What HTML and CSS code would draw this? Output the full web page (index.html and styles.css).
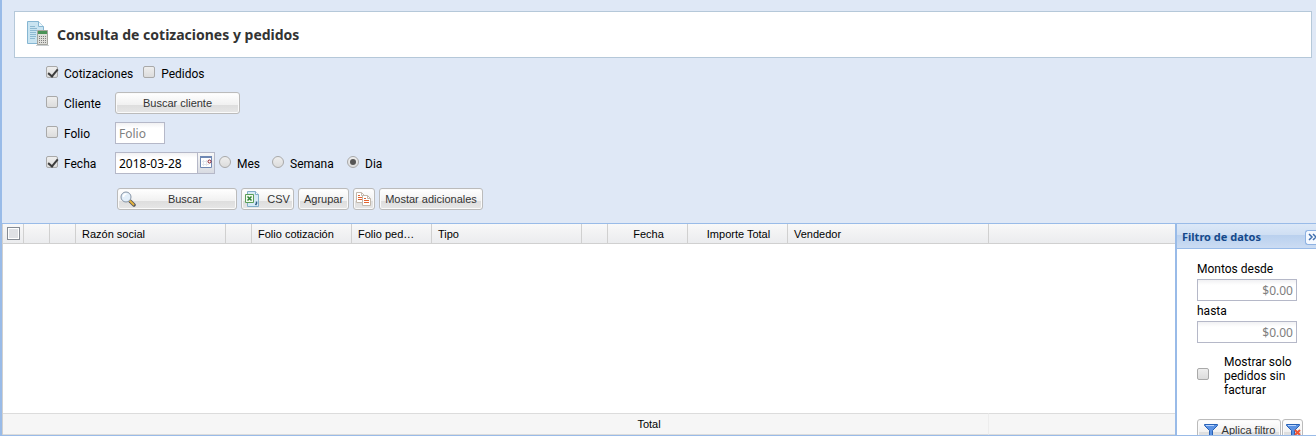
FILE: index.html
```html
<!DOCTYPE html>
<html lang="es">
<head>
<meta charset="utf-8">
<title>Consulta de cotizaciones y pedidos</title>
<link rel="stylesheet" href="styles.css">
</head>
<body>
<main class="page">
  <header class="title-bar">
    <svg class="title-icon" viewBox="0 0 24 26" aria-hidden="true">
      <path d="M1.500 .5h11l5 5v17h-16z" fill="#c9e4f1" stroke="#86b6d2"/>
      <path d="M12.500 .5v5h5" fill="#eef8fc" stroke="#86b6d2"/>
      <path d="M4 5.500h5M4 7.500h7M4 9.500h7M4 11.500h6M4 13.500h6M4 15.500h6M4 17.500h5" stroke="#8db9d1" fill="none"/>
      <path d="M11 9h11v15H11z" fill="#deded9"/>
      <path d="M11.500 9.500h10v14h-10z" fill="none" stroke="#a5a59e"/>
      <path d="M12 10h9v3h-9z" fill="#4a9357"/>
      <path d="M13.500 15v7M15.500 15v7M17.500 15v7M19.500 15v7" stroke="#7e7e7e" stroke-dasharray="1 1" fill="none"/>
      <path d="M10 24.500h13" stroke="#c8cdd0"/>
    </svg>
    <h1 class="title">Consulta de cotizaciones y pedidos</h1>
  </header>

  <form class="search">
    <div class="row">
      <label class="option"><input class="check" type="checkbox" checked>Cotizaciones</label>
      <label class="option"><input class="check" type="checkbox">Pedidos</label>
    </div>
    <div class="row">
      <label class="option option-fixed"><input class="check" type="checkbox">Cliente</label>
      <button class="btn btn-client" type="button">Buscar cliente</button>
    </div>
    <div class="row">
      <label class="option option-fixed"><input class="check" type="checkbox">Folio</label>
      <input class="field field-folio" type="text" placeholder="Folio" aria-label="Folio">
    </div>
    <div class="row">
      <label class="option option-fixed"><input class="check" type="checkbox" checked>Fecha</label>
      <div class="date">
        <input class="field field-date" type="text" value="2018-03-28" aria-label="Fecha">
        <button class="date-trigger" type="button" aria-label="Elegir fecha">
          <svg class="date-icon" viewBox="0 0 13 13" aria-hidden="true">
            <path d="M.5 .5h11v11H.5z" fill="#fff" stroke="#6f88b3"/>
            <path d="M0 0h12v2H0z" fill="#6f88b3"/>
            <path d="M3.500 4v6M6.500 4v6M2 5.500h5M2 8.500h7" stroke="#e2e6ed" fill="none"/>
            <circle cx="9.500" cy="5.500" r="1.500" fill="#fff" stroke="#8a1c28"/>
          </svg>
        </button>
      </div>
      <div class="periods">
        <label class="period period-month"><input class="radio" type="radio" name="periodo">Mes</label>
        <label class="period period-week"><input class="radio" type="radio" name="periodo">Semana</label>
        <label class="period"><input class="radio" type="radio" name="periodo" checked>Dia</label>
      </div>
    </div>
    <div class="actions">
      <button class="btn btn-search" type="button">
        <svg class="btn-icon" viewBox="0 0 16 16" aria-hidden="true">
          <path d="M10 10l4 4" stroke="#51545b" stroke-width="3.500" stroke-linecap="round"/>
          <path d="M10 10l3.500 3.500" stroke="#e5b23d" stroke-width="2" stroke-linecap="round"/>
          <circle cx="6" cy="6" r="5" fill="#e3effa" stroke="#8694a6"/>
          <path d="M3.500 6a3 3 0 0 1 3-3" stroke="#fff" stroke-width="1.500" fill="none"/>
        </svg>
        <span class="btn-text">Buscar</span>
      </button>
      <button class="btn btn-csv" type="button">
        <svg class="btn-icon" viewBox="0 0 16 16" aria-hidden="true">
          <path d="M2.500 .5h8l3 3v12h-11z" fill="#d6eaf5" stroke="#82afc9"/>
          <path d="M10.500 .5v3h3" fill="#f4fafd" stroke="#82afc9"/>
          <path d="M.5 3.500h8v8h-8z" fill="#f2faef" stroke="#5a9d57"/>
          <path d="M2.500 5.500l4 4M6.500 5.500l-4 4" stroke="#2f8137" stroke-width="1.500"/>
          <path d="M11.500 10.500v2l-1 1.500" stroke="#315e84" stroke-width="1.500" fill="none"/>
        </svg>
        <span>CSV</span>
      </button>
      <button class="btn btn-group" type="button">Agrupar</button>
      <button class="btn btn-copy" type="button" aria-label="Copiar">
        <svg class="btn-icon" viewBox="0 0 16 16" aria-hidden="true">
          <path d="M.5 1.500h5l3 3v7h-8z" fill="#fff" stroke="#c2b8ac"/>
          <path d="M5.500 1.500v3h3" fill="none" stroke="#c2b8ac"/>
          <path d="M2 4.500h2M2 6.500h4M2 8.500h4" stroke="#e2632f"/>
          <path d="M6.500 4.500h5l3 3v7h-8z" fill="#fff" stroke="#c2b8ac"/>
          <path d="M11.500 4.500v3h3" fill="none" stroke="#c2b8ac"/>
          <path d="M8 7.500h2M8 9.500h5M8 11.500h5" stroke="#e2632f"/>
        </svg>
      </button>
      <button class="btn btn-more" type="button">Mostar adicionales</button>
    </div>
  </form>

  <section class="results">
    <div class="grid-wrap">
      <table class="grid">
        <colgroup>
          <col class="c-check"><col class="c-icon"><col class="c-icon"><col class="c-wide"><col class="c-icon"><col class="c-100"><col class="c-80"><col class="c-wide"><col class="c-icon"><col class="c-80"><col class="c-100"><col class="c-seller"><col>
        </colgroup>
        <thead>
          <tr>
            <th class="th-check"><input class="grid-check" type="checkbox" aria-label="Seleccionar todo"></th>
            <th></th><th></th>
            <th>Razón social</th>
            <th></th>
            <th>Folio cotización</th>
            <th class="clipped">Folio pedido</th>
            <th>Tipo</th>
            <th></th>
            <th class="center">Fecha</th>
            <th class="center">Importe Total</th>
            <th>Vendedor</th>
            <th class="last"></th>
          </tr>
        </thead>
        <tbody><tr><td colspan="13"></td></tr></tbody>
        <tfoot>
          <tr><td colspan="9"></td><td class="center">Total</td><td></td><td class="total-end"></td><td></td></tr>
        </tfoot>
      </table>
    </div>
    <aside class="filter">
      <div class="filter-head">
        <h2 class="filter-title">Filtro de datos</h2>
        <button class="collapse" type="button" aria-label="Contraer">
          <svg class="collapse-icon" viewBox="0 0 9 8" aria-hidden="true"><path d="M1 1l3 3-3 3M5 1l3 3-3 3" fill="none" stroke="#3f6fae" stroke-width="1.500"/></svg>
        </button>
      </div>
      <form class="filter-body">
        <label class="amount">Montos desde<input class="field field-amount" type="text" placeholder="$0.00"></label>
        <label class="amount">hasta<input class="field field-amount" type="text" placeholder="$0.00"></label>
        <label class="pending"><input class="check" type="checkbox"><span>Mostrar solo pedidos sin facturar</span></label>
        <div class="filter-actions">
          <button class="btn btn-apply" type="button">
            <svg class="btn-icon" viewBox="0 0 16 16" aria-hidden="true"><path d="M1.500 2.500h13v1l-5 5v5l-3 2v-7l-5-5z" fill="#5b92e3" stroke="#2861b5"/><path d="M3 3.500h8" stroke="#bcd7ff"/></svg>
            <span>Aplica filtro</span>
          </button>
          <button class="btn btn-clear" type="button" aria-label="Quitar filtro">
            <svg class="btn-icon" viewBox="0 0 16 16" aria-hidden="true"><path d="M1.500 2.500h13v1l-5 5v5l-3 2v-7l-5-5z" fill="#5b92e3" stroke="#2861b5"/><path d="M3 3.500h8" stroke="#bcd7ff"/><path d="M10 8l5 5M15 8l-5 5" stroke="#ee5534" stroke-width="2"/></svg>
          </button>
        </div>
      </form>
    </aside>
  </section>
</main>
</body>
</html>
```
FILE: styles.css
```css
* { box-sizing: border-box; }

body {
  margin: 0;
  font: 12px/14px Roboto, Tahoma, sans-serif;
  color: #000;
}

.page {
  display: flex;
  flex-direction: column;
  height: 100vh;
  padding-top: 11px;
  background: #dfe8f6;
  border-left: 2px solid #99bbe8;
  border-bottom: 1px solid #99bbe8;
  overflow: hidden;
}

.title-bar {
  display: flex;
  align-items: center;
  gap: 7px;
  height: 47px;
  margin: 0 4px 0 12px;
  padding-left: 11px;
  background: #fff;
  border: 1px solid #b5c8d9;
  flex: none;
}
.title-icon { width: 24px; height: 26px; margin-bottom: 2px; }
.title { margin: 0; font: 700 14px/18px "Noto Sans", Tahoma, sans-serif; color: #333; }

.search {
  display: flex;
  flex-direction: column;
  height: 165px;
  flex: none;
  padding-left: 44px;
}
.row { display: flex; align-items: center; height: 30px; }
.option, .period { display: flex; align-items: center; gap: 6px; padding-top: 2px; }
.option { margin-right: 10px; }
.option-fixed { width: 69px; margin-right: 0; }

.check, .radio {
  appearance: none;
  position: relative;
  width: 12px;
  height: 12px;
  margin: 0 0 4px;
  border: 1px solid #a9a9a9;
  border-radius: 2px;
  background: linear-gradient(#eee, #dcdcdc);
  flex: none;
}
.check:checked::after {
  content: "";
  position: absolute;
  left: 3px;
  top: 0;
  width: 4px;
  height: 8px;
  border: solid #3c3c3c;
  border-width: 0 2px 2px 0;
  transform: rotate(40deg);
}
.radio { border-radius: 50%; }
.radio:checked::after {
  content: "";
  position: absolute;
  inset: 2px;
  border-radius: 50%;
  background: #555;
}

.btn {
  display: inline-flex;
  align-items: center;
  justify-content: center;
  height: 22px;
  padding: 0 2px;
  font: 11px/14px "Liberation Sans", Arial, sans-serif;
  color: #333;
  white-space: nowrap;
  border: 1px solid #bbb;
  border-radius: 3px;
  background: linear-gradient(#fff, #f1f1f1 58%, #dedede 62%, #e6e6e6);
  box-shadow: inset 0 0 0 1px #fafafa;
}
.btn-icon { width: 16px; height: 16px; flex: none; }
.btn-client { width: 125px; }

.field {
  height: 22px;
  padding: 0 3px;
  font: 12px/14px "Noto Sans", Tahoma, sans-serif;
  color: #000;
  border: 1px solid #b5b8c8;
  border-radius: 0;
  background: linear-gradient(#f1f1f3, #fff 5px);
}
.field::placeholder { color: #808080; opacity: 1; }
.field-folio { width: 50px; }

.date { display: flex; }
.field-date { width: 83px; }
.date-trigger {
  width: 17px;
  height: 22px;
  padding: 0;
  border: 1px solid #b5b8c8;
  border-left: 0;
  background: linear-gradient(#f8f8f8, #d8dbe2);
}
.date-icon { display: block; width: 13px; height: 13px; margin: 0 auto 2px; }
.periods { display: flex; margin-left: 4px; }
.period-month { width: 53px; }
.period-week { width: 75px; }

.actions { display: flex; gap: 4px; padding: 10px 0 0 71px; }
.btn-search { width: 120px; }
.btn-text { flex: 1; text-align: center; }
.btn-csv { width: 53px; gap: 6px; }
.btn-group { width: 51px; }
.btn-copy { width: 22px; }
.btn-more { width: 104px; }

.results { display: flex; flex: 1; min-height: 0; border-top: 1px solid #99bbe8; }
.grid-wrap { flex: 1; min-width: 0; background: #fff; border-left: 1px solid #d0d0d0; }
.grid {
  width: 100%;
  height: 100%;
  table-layout: fixed;
  border-collapse: separate;
  border-spacing: 0;
  font: 11px/14px "Liberation Sans", Arial, sans-serif;
}
.c-check { width: 21px; }
.c-icon { width: 26px; }
.c-80 { width: 80px; }
.c-100 { width: 100px; }
.c-wide { width: 150px; }
.c-seller { width: 201px; }
.grid th {
  height: 20px;
  padding: 0 6px;
  font-weight: 400;
  text-align: left;
  white-space: nowrap;
  overflow: hidden;
  text-overflow: ellipsis;
  border-right: 1px solid #d0d0d0;
  border-bottom: 1px solid #d0d0d0;
  background: linear-gradient(#f9f9f9, #f4f4f5 30%, #ebecee);
}
.grid .th-check { padding: 0 4px; }
.grid .clipped { padding-right: 16px; }
.grid .last { border-right: 0; }
.grid .center { padding-left: 8px; text-align: center; }
.grid-check {
  appearance: none;
  display: block;
  width: 13px;
  height: 13px;
  margin: 0;
  border: 1px solid #858b93;
  background: #dfe1e5;
  box-shadow: inset 0 0 0 1px #fff;
}
.grid td { padding: 0; }
.grid tfoot td {
  height: 22px;
  border-top: 1px solid #dcdcdc;
  border-bottom: 1px solid #dcdcdc;
  background: #f6f6f6;
}
.grid tfoot .center { padding-left: 2px; }
.grid tfoot .total-end { border-right: 1px solid #ededed; }

.filter {
  width: 141px;
  flex: none;
  overflow: hidden;
  background: #fff;
  border-left: 2px solid #99bbe8;
}
.filter-head {
  display: flex;
  align-items: center;
  justify-content: space-between;
  height: 25px;
  padding: 2px 0 0 5px;
  border-bottom: 1px solid #99bbe8;
  background: linear-gradient(#dce8f8, #cfdff3 44%, #b9d0ee 46%, #cbdcf3);
}
.filter-title { margin: 0; font: 700 11px/14px "Noto Sans", Tahoma, sans-serif; color: #15498b; }
.collapse {
  width: 11px;
  height: 15px;
  padding: 0 0 0 2px;
  border: 1px solid #8eb2e2;
  border-right: 0;
  border-radius: 3px 0 0 3px;
  background: #f5f9ff;
  overflow: hidden;
}
.collapse-icon { display: block; width: 9px; height: 8px; }
.filter-body { padding: 13px 0 0 20px; }
.amount { display: flex; flex-direction: column; gap: 3px; width: 100px; margin-bottom: 3px; }
.field-amount { width: 100px; text-align: right; }
.pending { display: flex; align-items: center; gap: 15px; width: 100px; margin-top: 12px; }
.filter-actions { display: flex; gap: 1px; margin-top: 22px; }
.btn-apply { width: 84px; gap: 3px; }
.btn-clear { width: 21px; }
```
